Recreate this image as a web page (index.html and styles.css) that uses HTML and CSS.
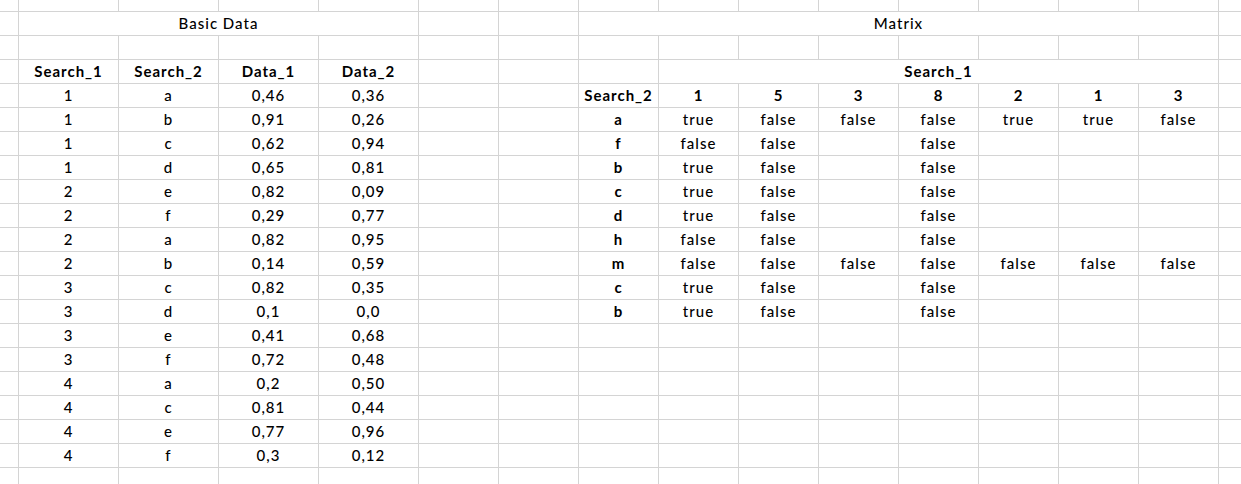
FILE: index.html
```html
<!DOCTYPE html>
<html>
<head>
<meta charset="utf-8">
<link rel="stylesheet" href="styles.css">
</head>
<body>
<div class="sheet">
<div class="row top"><span></span><span></span><span></span><span></span><span></span><span></span><span></span><span></span><span></span><span></span><span></span><span></span><span></span><span></span><span></span><span></span></div>
<div class="row"><span></span><span class="s4">Basic Data</span><span></span><span></span><span class="s8">Matrix</span><span></span></div>
<div class="row"><span></span><span></span><span></span><span></span><span></span><span></span><span></span><span></span><span></span><span></span><span></span><span></span><span></span><span></span><span></span><span></span></div>
<div class="row"><span></span><span class="b">Search_1</span><span class="b">Search_2</span><span class="b">Data_1</span><span class="b">Data_2</span><span></span><span></span><span></span><span class="s7 b">Search_1</span><span></span></div>
<div class="row"><span></span><span>1</span><span>a</span><span>0,46</span><span>0,36</span><span></span><span></span><span class="b">Search_2</span><span class="b">1</span><span class="b">5</span><span class="b">3</span><span class="b">8</span><span class="b">2</span><span class="b">1</span><span class="b">3</span><span></span></div>
<div class="row"><span></span><span>1</span><span>b</span><span>0,91</span><span>0,26</span><span></span><span></span><span class="b">a</span><span>true</span><span>false</span><span>false</span><span>false</span><span>true</span><span>true</span><span>false</span><span></span></div>
<div class="row"><span></span><span>1</span><span>c</span><span>0,62</span><span>0,94</span><span></span><span></span><span class="b">f</span><span>false</span><span>false</span><span></span><span>false</span><span></span><span></span><span></span><span></span></div>
<div class="row"><span></span><span>1</span><span>d</span><span>0,65</span><span>0,81</span><span></span><span></span><span class="b">b</span><span>true</span><span>false</span><span></span><span>false</span><span></span><span></span><span></span><span></span></div>
<div class="row"><span></span><span>2</span><span>e</span><span>0,82</span><span>0,09</span><span></span><span></span><span class="b">c</span><span>true</span><span>false</span><span></span><span>false</span><span></span><span></span><span></span><span></span></div>
<div class="row"><span></span><span>2</span><span>f</span><span>0,29</span><span>0,77</span><span></span><span></span><span class="b">d</span><span>true</span><span>false</span><span></span><span>false</span><span></span><span></span><span></span><span></span></div>
<div class="row"><span></span><span>2</span><span>a</span><span>0,82</span><span>0,95</span><span></span><span></span><span class="b">h</span><span>false</span><span>false</span><span></span><span>false</span><span></span><span></span><span></span><span></span></div>
<div class="row"><span></span><span>2</span><span>b</span><span>0,14</span><span>0,59</span><span></span><span></span><span class="b">m</span><span>false</span><span>false</span><span>false</span><span>false</span><span>false</span><span>false</span><span>false</span><span></span></div>
<div class="row"><span></span><span>3</span><span>c</span><span>0,82</span><span>0,35</span><span></span><span></span><span class="b">c</span><span>true</span><span>false</span><span></span><span>false</span><span></span><span></span><span></span><span></span></div>
<div class="row"><span></span><span>3</span><span>d</span><span>0,1</span><span>0,0</span><span></span><span></span><span class="b">b</span><span>true</span><span>false</span><span></span><span>false</span><span></span><span></span><span></span><span></span></div>
<div class="row"><span></span><span>3</span><span>e</span><span>0,41</span><span>0,68</span><span></span><span></span><span></span><span></span><span></span><span></span><span></span><span></span><span></span><span></span><span></span></div>
<div class="row"><span></span><span>3</span><span>f</span><span>0,72</span><span>0,48</span><span></span><span></span><span></span><span></span><span></span><span></span><span></span><span></span><span></span><span></span><span></span></div>
<div class="row"><span></span><span>4</span><span>a</span><span>0,2</span><span>0,50</span><span></span><span></span><span></span><span></span><span></span><span></span><span></span><span></span><span></span><span></span><span></span></div>
<div class="row"><span></span><span>4</span><span>c</span><span>0,81</span><span>0,44</span><span></span><span></span><span></span><span></span><span></span><span></span><span></span><span></span><span></span><span></span><span></span></div>
<div class="row"><span></span><span>4</span><span>e</span><span>0,77</span><span>0,96</span><span></span><span></span><span></span><span></span><span></span><span></span><span></span><span></span><span></span><span></span><span></span></div>
<div class="row"><span></span><span>4</span><span>f</span><span>0,3</span><span>0,12</span><span></span><span></span><span></span><span></span><span></span><span></span><span></span><span></span><span></span><span></span><span></span></div>
<div class="row"><span></span><span></span><span></span><span></span><span></span><span></span><span></span><span></span><span></span><span></span><span></span><span></span><span></span><span></span><span></span><span></span></div>
</div>
</body>
</html>
```

FILE: styles.css
```css
html, body {
  margin: 0;
  padding: 0;
  background: #ffffff;
  overflow: hidden;
}

.sheet {
  width: 1299px;
  font-family: Lato, "Liberation Sans", sans-serif;
  font-size: 15px;
  font-weight: 500;
  letter-spacing: 1px;
  color: #000000;
}

.row {
  display: grid;
  grid-template-columns: 19px repeat(4, 100px) repeat(11, 80px);
  height: 24px;
}

.row.top {
  height: 12px;
}

.row > span {
  box-sizing: border-box;
  border-right: 1px solid #d4d4d4;
  border-bottom: 1px solid #d4d4d4;
  line-height: 23px;
  text-align: center;
  white-space: nowrap;
  overflow: hidden;
}

.row > .b {
  font-weight: bold;
}

.row > .s4 {
  grid-column: span 4;
}

.row > .s7 {
  grid-column: span 7;
}

.row > .s8 {
  grid-column: span 8;
}
```
